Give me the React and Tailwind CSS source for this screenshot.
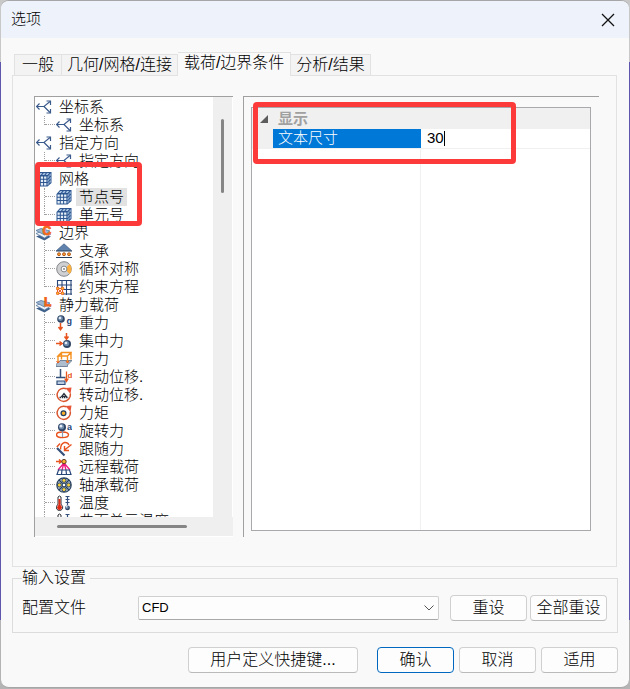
import React, { useState } from 'react'
import clsx from 'clsx'

const TABS = ['一般', '几何/网格/连接', '载荷/边界条件', '分析/结果']

const TREE = [
  { label: '坐标系', icon: 'axes', children: [{ label: '坐标系', icon: 'axes' }] },
  { label: '指定方向', icon: 'axes', children: [{ label: '指定方向', icon: 'axes' }] },
  {
    label: '网格',
    icon: 'mesh',
    children: [
      { label: '节点号', icon: 'mesh' },
      { label: '单元号', icon: 'mesh' },
    ],
  },
  {
    label: '边界',
    icon: 'boundary',
    children: [
      { label: '支承', icon: 'support' },
      { label: '循环对称', icon: 'cyclic' },
      { label: '约束方程', icon: 'constraint' },
    ],
  },
  {
    label: '静力载荷',
    icon: 'load',
    children: [
      { label: '重力', icon: 'gravity' },
      { label: '集中力', icon: 'force' },
      { label: '压力', icon: 'pressure' },
      { label: '平动位移.', icon: 'translate' },
      { label: '转动位移.', icon: 'rotate' },
      { label: '力矩', icon: 'moment' },
      { label: '旋转力', icon: 'spin' },
      { label: '跟随力', icon: 'follower' },
      { label: '远程载荷', icon: 'remote' },
      { label: '轴承载荷', icon: 'bearing' },
      { label: '温度', icon: 'temperature' },
      { label: '曲面单元温度', icon: 'temperature' },
    ],
  },
]

const NAVY = '#34507a'
const ORANGE = '#e8541e'

const layers = (
  <>
    <path d="M0 11.500 5 9.500l10 2-6.500 4z" fill="#3f618b" />
    <path d="M0 8.500 5 6.500l10 2.500-6.500 4z" fill="#eef3f9" stroke="#5a7ba2" strokeWidth=".8" />
    <path d="M0 5.500 5 3.500l9 2.500-5.500 4z" fill="#9db5cf" stroke="#5a7ba2" strokeWidth=".8" />
  </>
)

const ball = (cx, cy, r = 3) => (
  <>
    <circle cx={cx} cy={cy} r={r} fill="#2f4566" />
    <circle cx={cx - 0.5} cy={cy - 0.5} r={r * 0.65} fill="#6f8bab" />
    <circle cx={cx - 1} cy={cy - 1} r={r / 3} fill="#e3ebf4" />
  </>
)

// open ring with the arrow head at its upper right
const turn = (
  <>
    <path d="M10.500 1.800A6.600 6.600 0 1 0 14.200 6.500" fill="none" stroke="#d9562f" strokeWidth="1.500" />
    <path d="m9.500 1 6-.5-1 6.500z" fill="#e8543a" />
  </>
)

const ICONS = {
  axes: (
    <g fill="none" stroke="#3b5a8c" strokeWidth="1.200">
      <path d="M.5 7.500h7.500L14 2.500M8 7.500l6 6" />
      <path d="M3.500 4.500.5 7.500l3 3M10.500 2h4v4M10.500 14h4v-4" />
    </g>
  ),
  mesh: (
    <>
      <path d="M.500 5 4 1h11.500v11l-4 3.500H.500z" fill="#2d5690" />
      <path d="M1.500 5.500h2.300v2.300H1.500zM4.800 5.500h2.300v2.300H4.800zM8.100 5.500h2.300v2.300H8.100zM1.500 8.800h2.300v2.300H1.500zM4.800 8.800h2.300v2.300H4.800zM8.100 8.800h2.300v2.300H8.100zM1.500 12.100h2.300v2.300H1.500zM4.800 12.100h2.300v2.300H4.800zM8.100 12.100h2.300v2.300H8.100z" fill="#e3edf8" />
      <path d="M4.300 2h2L4.800 4H2.700zM7.700 2h2L8.300 4H6.200zM11 2h2.300l-1.700 2H9.600zM11.500 5.500l1.200-1.300v2.300l-1.200 1.200zM13.500 3.500l1.200-1.200v2.300l-1.200 1.200zM11.500 9l1.200-1.200v2.200l-1.200 1.200zM13.500 7l1.200-1.200V8l-1.200 1.200zM11.500 12.300l1.200-1.200v2.200l-1.200 1.200zM13.500 10.300l1.200-1.200v2.200l-1.200 1.200z" fill="#a9c4e4" />
    </>
  ),
  boundary: (
    <>
      {layers}
      <text x="6.500" y="9.500" fontSize="12" fontWeight="bold" fill="#f26a1b" stroke="#f26a1b" strokeWidth=".8">C</text>
    </>
  ),
  load: (
    <>
      {layers}
      <text x="8" y="9" fontSize="12" fontWeight="bold" fill="#f2641b" stroke="#f2641b" strokeWidth=".8">L</text>
    </>
  ),
  support: (
    <>
      <path d="M8 .8 15.500 7.500H.500z" fill="#5f83ad" stroke={NAVY} strokeWidth=".6" />
      <path d="M0 8h16M0 14.500h16" stroke="#27405f" strokeWidth="1.200" />
      <g fill="#f9a02c" stroke="#a04310" strokeWidth=".8">
        <circle cx="3" cy="11.200" r="1.500" />
        <circle cx="8" cy="11.200" r="1.500" />
        <circle cx="13" cy="11.200" r="1.500" />
      </g>
    </>
  ),
  cyclic: (
    <>
      <circle cx="8" cy="8" r="7.300" fill="#cfd0d2" stroke="#85888c" strokeWidth="1" />
      <path d="M9 8 13.500 3a7 7 0 0 1 0 10z" fill="#fbb040" />
      <circle cx="8" cy="8" r="2.900" fill="#fff" stroke="#85888c" strokeWidth="1" />
      <circle cx="8" cy="8" r="1" fill="#85888c" />
    </>
  ),
  constraint: (
    <>
      <path d="M1 1.500h15M1 6h15M6 10.500h10M6 15h10M1.500 1v8M6 1v8M10.500 1v15M15 1v15" stroke="#27467a" strokeWidth="1.100" />
      <path d="M1.500 9.500h5v5h-5zM1.500 9.500l5 5M6.500 9.500l-5 5" fill="none" stroke={ORANGE} strokeWidth=".9" />
      <g fill="#fbc02d" stroke={ORANGE} strokeWidth=".9">
        <circle cx="1.700" cy="9.500" r="1.400" />
        <circle cx="6.500" cy="9.500" r="1.400" />
        <circle cx="1.700" cy="14.300" r="1.400" />
        <circle cx="6.500" cy="14.300" r="1.400" />
      </g>
    </>
  ),
  gravity: (
    <>
      {ball(5, 4, 3.8)}
      <path d="M4.500 8v6M2.500 12l2 2.700 2-2.700" fill="none" stroke={ORANGE} strokeWidth="1.500" />
      <text x="10.500" y="9" fontSize="9" fontWeight="bold" fill="#27467a">g</text>
    </>
  ),
  force: (
    <>
      {ball(11, 11, 4)}
      <path d="M10.500 0v5M8.500 3.500l2 2.700 2-2.700M0 10.500h5M3.500 8.500l2.700 2-2.700 2" fill="none" stroke={ORANGE} strokeWidth="1.500" />
    </>
  ),
  pressure: (
    <>
      <path d="M0 13.500 4 9.500h12l-4.500 4.500v1.500H0z" fill="#aebdce" stroke="#5b6f88" strokeWidth=".8" />
      <path d="M2 5 5.500 1.500H15L11.500 5zM2 5v7M11.500 5v7M15 1.500v7M5.500 1.500v7" fill="none" stroke="#f5901e" strokeWidth="1.400" />
      <path d="m.5 10 1.500 2L3.500 10M10 10l1.500 2 1.500-2" fill="none" stroke={ORANGE} />
    </>
  ),
  translate: (
    <>
      <path d="M4.500 0v8M0 8.500h9.500" stroke={NAVY} strokeWidth="1.500" />
      <path d="M1 12h8v3.500H1z" fill="#b8cbe0" stroke={NAVY} strokeWidth="1.200" />
      <path d="M10.500 2.500v9.500M8.700 9.500l1.800 3 1.800-3" fill="none" stroke={ORANGE} strokeWidth="1.300" />
      <text x="11.500" y="8.500" fontSize="8" fontWeight="bold" fill={ORANGE}>d</text>
    </>
  ),
  rotate: (
    <>
      {turn}
      <path d="M8 5.500 11.500 10h-7z" fill="#27303c" />
      <path d="M3.500 10.500h9" stroke="#27303c" strokeWidth="1.500" strokeDasharray="1.500 .7" />
      <path d="M7.500 8h1v1h-1z" fill="#fff" />
    </>
  ),
  moment: (
    <>
      {turn}
      <circle cx="7.500" cy="8.200" r="2.400" fill="#fbb02d" stroke="#27405f" strokeWidth="1.300" />
    </>
  ),
  spin: (
    <>
      <ellipse cx="6.500" cy="11.800" rx="6" ry="2.800" fill="none" stroke={ORANGE} strokeWidth="1.400" />
      <path d="M6.500 7v7" stroke="#8d9bb0" strokeWidth="1.200" />
      {ball(6, 4.2, 4)}
      <text x="11" y="6.500" fontSize="9" fontWeight="bold" fill="#27467a">a</text>
    </>
  ),
  follower: (
    <>
      <path d="m1 7 7.500 7.500" stroke={NAVY} strokeWidth="2.200" />
      <path d="M4.500 8.500q0-6 4-7 3.500-.3 4.500 2.500M8.500 9 15.500 3.500M8.500 5v4.500h4.500M.800 6 4 2.500" fill="none" stroke={ORANGE} strokeWidth="1.400" />
    </>
  ),
  remote: (
    <>
      <path d="m8 4-6 7M8 4 6 11M8 4l2 7M8 4l6 7" stroke="#ee1a80" strokeWidth="1.300" />
      <path d="M0 2.500h5M3 .5l2.500 2L3 4.500" fill="none" stroke={ORANGE} strokeWidth="1.400" />
      <circle cx="8" cy="2.600" r="2.200" fill="#fbb02d" stroke="#5b3b20" strokeWidth="1" />
      <path d="M2.500 11h11l1.500 4.500H1zM6 11l-.5 4.500M10 11l.5 4.500" fill="#fff" stroke="#27467a" strokeWidth="1.200" />
    </>
  ),
  bearing: (
    <>
      <circle cx="8" cy="8" r="7.200" fill="#b4c2d2" stroke="#27405f" strokeWidth="1.200" />
      <path d="m3 3 10 10M13 3 3 13" stroke="#27405f" strokeWidth="1.200" />
      <g fill="#fbd23c" stroke="#27405f" strokeWidth=".9">
        <circle cx="8" cy="3.400" r="2" />
        <circle cx="8" cy="12.600" r="2" />
        <circle cx="3.400" cy="8" r="2" />
        <circle cx="12.600" cy="8" r="2" />
      </g>
      <circle cx="8" cy="8" r="1.700" fill="#fff" stroke="#27405f" strokeWidth=".8" />
    </>
  ),
  temperature: (
    <>
      <path d="M2 2q1.500-2 3 0v7.500a3.200 3.200 0 1 1-3 0z" fill="#fff" stroke="#2b2f36" />
      <path d="M3.500 4v7" stroke="#e02a12" strokeWidth="2" />
      <circle cx="3.500" cy="12.500" r="2.400" fill="#e02a12" />
      <path d="M11.500 1v9M9.500 1.500h4M9.500 4.500h4M9.500 7.500h4" stroke={NAVY} strokeWidth="1.200" />
      {ball(11.5, 12.8, 2.4)}
    </>
  ),
}

function TreeIcon({ name }) {
  return (
    <svg viewBox="0 0 16 16" className="size-4 shrink-0" aria-hidden="true">
      {ICONS[name]}
    </svg>
  )
}

function TreeRow({ item, selected, onSelect }) {
  return (
    <button type="button" onClick={onSelect} className="flex h-[18px] items-center gap-1 whitespace-nowrap">
      <TreeIcon name={item.icon} />
      <span className={clsx('px-[3px] leading-[18px]', selected && 'bg-[#e2e2e2]')}>{item.label}</span>
    </button>
  )
}

function OptionTree() {
  const [selected, setSelected] = useState('节点号')

  return (
    <div className="relative flex w-[199px] shrink-0 flex-col border-t border-l border-[#a0a0a0] bg-[#efefef] text-[15px]">
      <div className="flex min-h-0 flex-1">
        <ul className="min-w-0 flex-1 overflow-hidden bg-white pt-px pl-px">
          {TREE.map((group, gi) => (
            <li key={gi}>
              <TreeRow item={group} />
              <ul className="pl-2">
                {group.children.map((child, i) => (
                  <li key={child.label} className="flex">
                    {/* dotted connector */}
                    <span
                      className={clsx(
                        'w-px shrink-0 border-l border-dotted border-[#a0a0a0]',
                        i === group.children.length - 1 ? 'h-[9px]' : 'h-[18px]'
                      )}
                    />
                    <span className="mr-px h-[9px] w-2.5 shrink-0 border-b border-dotted border-[#a0a0a0]" />
                    <TreeRow
                      item={child}
                      selected={gi > 1 && selected === child.label}
                      onSelect={() => setSelected(child.label)}
                    />
                  </li>
                ))}
              </ul>
            </li>
          ))}
        </ul>
        <div className="flex w-5 justify-center border-r border-white pt-[22px]">
          <div className="h-[74px] w-[3px] rounded-full bg-[#858585]" />
        </div>
      </div>
      <div className="flex h-[20px] items-center border-b border-white pl-[22px]">
        <div className="h-[3px] w-[130px] rounded-full bg-[#858585]" />
      </div>
      <div className="pointer-events-none absolute top-[65px] left-0 h-[64px] w-[107px] rounded-[4px] border-[5px] border-[#fd3a3a]" />
    </div>
  )
}

function PropertyGrid() {
  const [size, setSize] = useState('30')

  return (
    <div className="relative flex min-w-0 flex-1 flex-col border-t border-l border-[#a0a0a0] pt-2.5 pr-2 pb-1.5 pl-[7px]">
      <div className="flex flex-1 flex-col border border-[#a9a9ad] bg-white text-[15px]">
        <div className="flex h-[21px] items-center bg-[#f0f0f0] pl-2">
          <svg viewBox="0 0 8 8" className="size-2" aria-hidden="true">
            <path d="M8 0v8H0z" fill="#5c5c5c" />
          </svg>
          <span className="pl-2.5 leading-[20px] font-bold text-[#a0a0a0]">显示</span>
        </div>
        <div className="flex h-5 border-b border-[#f0f0f0]">
          <div className="flex w-1/2 bg-[#f0f0f0] pl-[21px]">
            <label htmlFor="text-size" className="flex-1 bg-[#0078d7] pl-[5px] leading-[18px] text-white">
              文本尺寸
            </label>
          </div>
          <div className="flex w-1/2 items-center pl-1.5">
            <input
              id="text-size"
              value={size}
              onChange={e => setSize(e.target.value)}
              className="field-sizing-content h-[18px] caret-transparent outline-none"
            />
            <span className="h-[15px] w-px bg-black" />
          </div>
        </div>
        <div className="w-1/2 flex-1 border-r border-[#f0f0f0]" />
      </div>
      <div className="pointer-events-none absolute top-[5px] left-[9px] h-[62px] w-[263px] rounded-[4px] border-[5px] border-[#fd3a3a]" />
    </div>
  )
}

function DialogButton({ children, className, primary }) {
  return (
    <button
      type="button"
      className={clsx(
        'h-[26px] rounded-[4px] border bg-[#fdfdfd] text-base leading-[22px] whitespace-nowrap',
        primary ? 'border-[#0067c0]' : 'border-[#d0d0d0] border-b-[#bababa]',
        className
      )}
    >
      {children}
    </button>
  )
}

export default function App() {
  const [tab, setTab] = useState(2)

  return (
    <div className="h-screen min-h-[400px] bg-[linear-gradient(#c8c8c8_9%,#5f57ad_9%,#5f57ad_90%,#b4b4b4_90%)] px-px pb-px font-['Liberation_Sans','Noto_Sans_CJK_SC',sans-serif] font-light text-black">
      <div className="flex h-full flex-col overflow-hidden rounded-lg border-y border-[#a6a6a6] bg-[#f9f9f9]">
        <header className="flex h-[37px] shrink-0 items-center justify-between bg-[#eef3fb] pr-[13px] pl-2.5">
          <h1 className="text-[15px]">选项</h1>
          <button type="button" aria-label="关闭" className="p-px">
            <svg viewBox="0 0 14 14" className="size-3.5" fill="none" stroke="#111" strokeWidth="1.300">
              <path d="m1 1 12 12M13 1 1 13" />
            </svg>
          </button>
        </header>

        <main className="flex min-h-0 flex-1 flex-col px-[11px] py-3.5">
          <div role="tablist" className="flex items-end pl-0.5 text-base">
            {TABS.map((name, i) => (
              <button
                key={name}
                type="button"
                role="tab"
                aria-selected={i === tab}
                onClick={() => setTab(i)}
                className={clsx(
                  'min-w-12 border-t border-r border-[#e2e2e2] whitespace-nowrap first:border-l',
                  i === tab
                    ? 'relative -mb-px h-6 bg-[#f9f9f9] px-1.5 pb-1 leading-5'
                    : 'h-[21px] bg-[#f3f3f3] px-[5px] leading-5'
                )}
              >
                {name}
              </button>
            ))}
          </div>

          <div className="mr-px flex min-h-0 flex-1 gap-2.5 border border-[#e2e2e2] pt-5 pr-[17px] pb-[29px] pl-[21px]">
            <OptionTree />
            <PropertyGrid />
          </div>

          <fieldset className="mt-0.5 border border-[#dcdcdc] px-[9px] pt-2 pb-[11px]">
            <legend className="pr-1 text-base leading-[18px]">输入设置</legend>
            <div className="flex items-center">
              <label htmlFor="profile" className="w-[116px] text-base leading-6">
                配置文件
              </label>
              <div className="relative mr-[11px] flex-1">
                <select
                  id="profile"
                  className="block h-6 w-full appearance-none rounded-[2px] border border-[#d0d0d0] border-b-[#a8a8a8] bg-[#fdfdfd] pl-[3px] text-[13px]"
                >
                  <option>CFD</option>
                </select>
                <svg
                  viewBox="0 0 10 6"
                  className="pointer-events-none absolute top-[9px] right-[5px] h-1.5 w-2.5"
                  fill="none"
                  stroke="#555"
                >
                  <path d="m.5.5 4.500 4.500L9.500.5" />
                </svg>
              </div>
              <DialogButton className="mr-[3px] w-[77px]">重设</DialogButton>
              <DialogButton className="mr-px w-[77px]">全部重设</DialogButton>
            </div>
          </fieldset>

          <footer className="mt-3.5 flex justify-end gap-[5px]">
            <DialogButton className="mr-3.5 w-[170px]">用户定义快捷键...</DialogButton>
            <DialogButton primary className="w-[77px]">确认</DialogButton>
            <DialogButton className="w-[77px]">取消</DialogButton>
            <DialogButton className="w-[77px]">适用</DialogButton>
          </footer>
        </main>
      </div>
    </div>
  )
}
